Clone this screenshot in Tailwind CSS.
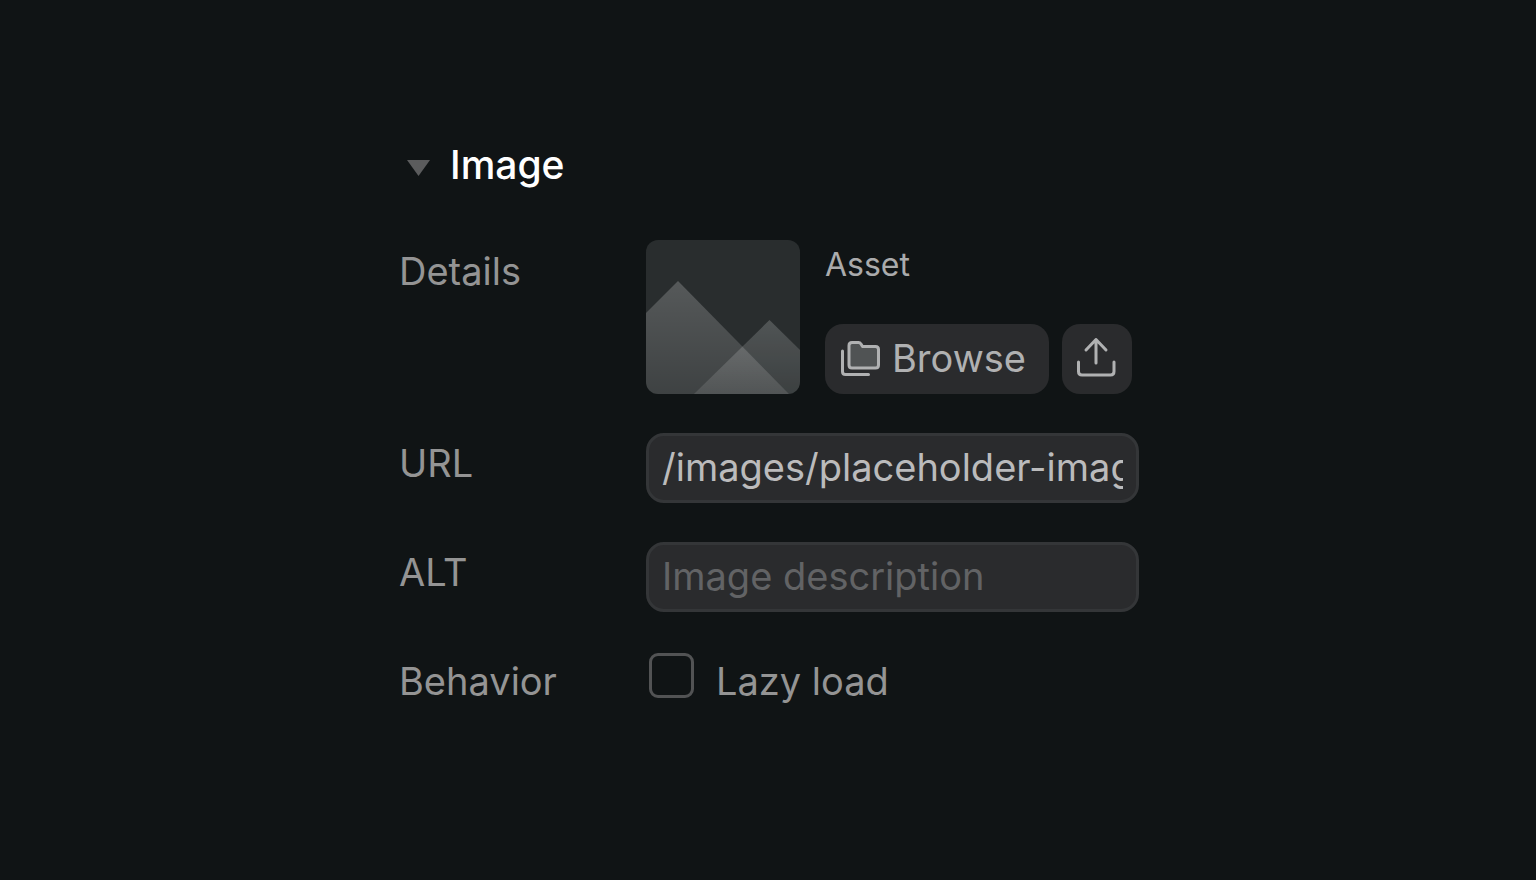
<!DOCTYPE html>
<html lang="en">
<head>
<meta charset="utf-8">
<meta name="viewport" content="width=device-width, initial-scale=1">
<title>Image settings</title>
<script src="https://cdn.jsdelivr.net/npm/@tailwindcss/browser@4"></script>
</head>
<body class="min-h-screen bg-[#101415] font-['Inter','Liberation_Sans',sans-serif] text-[38px] text-[#949494]">
<main class="mx-auto flex w-full max-w-[742px] flex-col gap-11 pt-[136px] pb-16 pl-0.5">
  <h1 class="font-medium text-white">
    <button type="button" aria-expanded="true" class="flex h-[60px] items-center gap-5 pb-0.5 pl-2">
      <svg class="mt-1.5 h-4 w-[23px]" viewBox="0 0 23 16" aria-hidden="true"><path d="M0 0H23L11.5 16Z" fill="#5b5c5d"/></svg>
      <span class="text-[39px]">Image</span>
    </button>
  </h1>
  <form class="grid grid-cols-[247px_minmax(0,1fr)] gap-y-[39px]">
    <span class="leading-[62px]">Details</span>
    <div class="flex gap-[25px]">
      <svg class="size-[154px] shrink-0 rounded-xl" viewBox="0 0 154 154" role="img" aria-label="Image preview">
        <defs>
          <linearGradient id="left" gradientUnits="userSpaceOnUse" x1="0" y1="41" x2="0" y2="154"><stop stop-color="#fff" stop-opacity=".21"/><stop offset="1" stop-color="#fff" stop-opacity=".10"/></linearGradient>
          <linearGradient id="right" gradientUnits="userSpaceOnUse" x1="0" y1="80" x2="0" y2="154"><stop stop-color="#fff" stop-opacity=".21"/><stop offset="1" stop-color="#fff" stop-opacity=".10"/></linearGradient>
        </defs>
        <path d="M0 0H154V154H0Z" fill="#292d2e"/>
        <path d="M0 73L32 41L143 154H0Z" fill="url(#left)"/>
        <path d="M48 154L123.500 80L154 110V154Z" fill="url(#right)"/>
        <path d="M96.500 107L143 154H154V110L123.500 80Z" fill="#292d2e" fill-opacity=".1"/>
      </svg>
      <div class="flex flex-col justify-between">
        <span class="text-[32px] leading-[50px] text-[#aaabac]">Asset</span>
        <div class="flex gap-[13px]">
          <button type="button" class="flex h-[70px] items-center gap-[11px] rounded-[18px] bg-[#2a2b2d] pr-[23px] pb-0.5 pl-4 text-[#b0b1b2]">
            <svg class="h-9 w-10" viewBox="0 0 40 36" fill="none" stroke="#b0b1b2" stroke-width="3" stroke-linecap="round" stroke-linejoin="round" aria-hidden="true">
              <path d="M8 5.500Q8 2.500 11 2.500H17.500Q19 2.500 20 4L21.500 6.500H34.500Q37.500 6.500 37.500 9.500V25Q37.500 28 34.500 28H11Q8 28 8 25Z" fill="#505354"/>
              <path d="M1.500 11V31.500Q1.500 34.500 4.500 34.500H27.500"/>
            </svg>
            <span>Browse</span>
          </button>
          <button type="button" aria-label="Upload" class="flex size-[70px] items-center justify-center rounded-[18px] bg-[#2a2b2d] pb-1">
            <svg class="size-10" viewBox="0 0 40 40" fill="none" stroke="#b0b1b2" stroke-width="3" stroke-linecap="round" stroke-linejoin="round" aria-hidden="true">
              <path d="M19 26V2.500M9 13L19 2.500L29 13M1.500 25V34.500Q1.500 38 5 38H33.500Q37 38 37 34.500V25"/>
            </svg>
          </button>
        </div>
      </div>
    </div>
    <label for="url" class="leading-[60px]">URL</label>
    <input id="url" type="text" value="/images/placeholder-image.svg" class="h-[70px] w-full rounded-[18px] border-3 border-[#343638] bg-[#2a2b2d] px-[13px] pb-0.5 text-[#bbbbbc] outline-none">
    <label for="alt" class="leading-[60px]">ALT</label>
    <input id="alt" type="text" placeholder="Image description" class="h-[70px] w-full rounded-[18px] border-3 border-[#343638] bg-[#2a2b2d] px-[13px] pb-0.5 text-[#bbbbbc] outline-none placeholder:text-[#626365]">
    <span class="leading-[60px]">Behavior</span>
    <div class="flex items-start gap-[22px] pl-[3px]">
      <input id="lazy" type="checkbox" class="mt-0.5 size-[45px] appearance-none rounded-[9px] border-3 border-[#525354] checked:bg-[#949494]">
      <label for="lazy" class="leading-[60px]">Lazy load</label>
    </div>
  </form>
</main>
</body>
</html>
